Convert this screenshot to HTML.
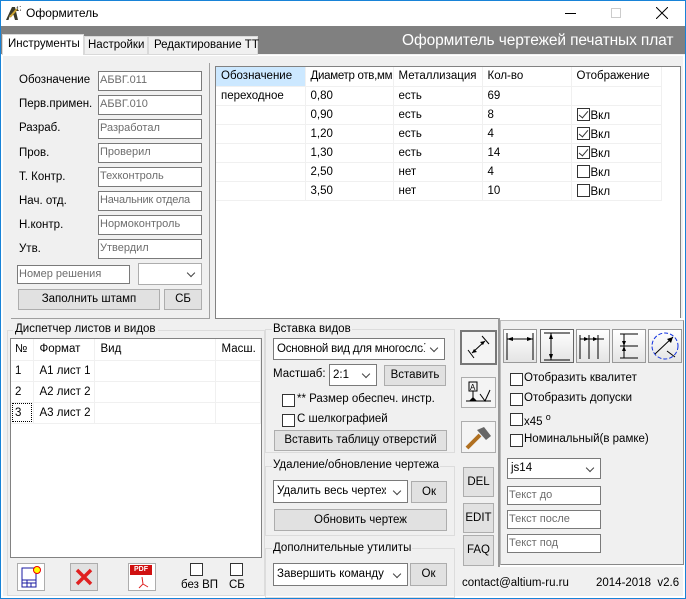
<!DOCTYPE html>
<html><head><meta charset="utf-8"><style>
*{box-sizing:border-box;margin:0;padding:0}
body{width:686px;height:599px;overflow:hidden;background:#f0f0f0;font-family:"Liberation Sans","DejaVu Sans",sans-serif;font-size:11.5px;color:#000;position:relative}
.a{position:absolute}
.win{left:0;top:0;width:686px;height:599px;border:1px solid #1883d7}
.inp{position:absolute;background:#fff;border:1px solid #7a7a7a;color:#6d6d6d;padding-left:1px;line-height:17px;font-size:11px;white-space:nowrap;overflow:hidden}
.btn{position:absolute;background:#e1e1e1;border:1px solid #adadad;text-align:center;font-size:11.5px}
.cmb{position:absolute;background:#fff;border:1px solid #7a7a7a;padding-left:3px;font-size:11.5px;white-space:nowrap;overflow:hidden}
.cmb:after{content:"";position:absolute;right:7px;top:50%;margin-top:-4px;width:5px;height:5px;border-right:1px solid #444;border-bottom:1px solid #444;transform:rotate(45deg);background:#fff;box-shadow:0 0 0 6px #fff}
.cb{position:absolute;width:13px;height:13px;background:#fff;border:1px solid #333}
.lbl{position:absolute;white-space:nowrap}
.grp{position:absolute;border:1px solid #dcdcdc}
.tbl td{border-right:1px solid #f0f0f0;border-bottom:1px solid #f0f0f0;padding-left:5px;height:19px;white-space:nowrap;overflow:hidden}
.lst td{border-right:1px solid #f0f0f0;border-bottom:1px solid #f0f0f0;padding-left:6px;height:21px;white-space:nowrap}
.tb{position:absolute;width:34px;height:34px;background:linear-gradient(#fff,#e4e4e4);border:1px solid #999}
.vb{position:absolute;background:#e1e1e1;border:1px solid #adadad}
.ck{display:inline-block;width:13px;height:13px;border:1px solid #333;vertical-align:-2px;margin-right:1px;position:relative;background:#fff}
.ck.on:after{content:"";position:absolute;left:3px;top:0px;width:4px;height:8px;border-right:1px solid #333;border-bottom:1px solid #333;transform:rotate(40deg)}
</style></head><body>
<div class="a" style="left:0;top:0;width:686px;height:26px;background:#fff"></div>
<svg class="a" style="left:5px;top:5px" width="16" height="16"><path d="M1 15 L7 2 L10 2 L13 15 L10 15 L8.5 10 L5 10 L3.5 15Z" fill="#3a3a2a"/><path d="M5 12 L12 4" stroke="#c8a030" stroke-width="2"/><text x="11" y="6" font-size="6" fill="#000">17</text></svg>
<div class="lbl" style="left:26px;top:6px;font-size:12px">Оформитель</div>
<div class="a" style="left:565px;top:13px;width:11px;height:1px;background:#000"></div>
<div class="a" style="left:611px;top:8px;width:10px;height:10px;border:1px solid #ccc"></div>
<svg class="a" style="left:656px;top:7px" width="12" height="12"><path d="M0 0L12 12M12 0L0 12" stroke="#000" stroke-width="1"/></svg>
<div class="a" style="left:1px;top:26px;width:684px;height:28px;background:#808080"></div>
<div class="lbl" style="left:402px;top:32px;font-size:15.5px;color:#fff;letter-spacing:-0.1px">Оформитель чертежей печатных плат</div>
<div class="a" style="left:84px;top:36px;width:64px;height:19px;background:#f0f0f0;border:1px solid #d9d9d9"></div>
<div class="lbl" style="left:88px;top:39px">Настройки</div>
<div class="a" style="left:148px;top:36px;width:110px;height:19px;background:#f0f0f0;border:1px solid #d9d9d9"></div>
<div class="lbl" style="left:154px;top:39px">Редактирование ТТ</div>
<div class="a" style="left:2px;top:34px;width:82px;height:22px;background:#fff;border:1px solid #d9d9d9;border-bottom:none"></div>
<div class="lbl" style="left:8px;top:38px">Инструменты</div>
<div class="a" style="left:1px;top:55px;width:684px;height:543px;background:#fff"></div>
<div class="a" style="left:3px;top:56px;width:680px;height:540px;background:#f0f0f0"></div>

<div class="a" style="left:11px;top:63px;width:199px;height:256px;border-right:1px solid #a0a0a0;border-bottom:1px solid #a0a0a0"></div>
<div class="lbl" style="left:19px;top:74px">Обозначение</div>
<div class="lbl" style="left:19px;top:98px">Перв.примен.</div>
<div class="lbl" style="left:19px;top:122px">Разраб.</div>
<div class="lbl" style="left:19px;top:147px">Пров.</div>
<div class="lbl" style="left:19px;top:171px">Т. Контр.</div>
<div class="lbl" style="left:19px;top:195px">Нач. отд.</div>
<div class="lbl" style="left:19px;top:219px">Н.контр.</div>
<div class="lbl" style="left:19px;top:243px">Утв.</div>
<div class="inp" style="left:98px;top:71px;width:104px;height:20px">АБВГ.011</div>
<div class="inp" style="left:98px;top:95px;width:104px;height:20px">АБВГ.010</div>
<div class="inp" style="left:98px;top:119px;width:104px;height:20px">Разработал</div>
<div class="inp" style="left:98px;top:143px;width:104px;height:20px">Проверил</div>
<div class="inp" style="left:98px;top:167px;width:104px;height:20px">Техконтроль</div>
<div class="inp" style="left:98px;top:191px;width:104px;height:20px;letter-spacing:-0.2px">Начальник отдела</div>
<div class="inp" style="left:98px;top:215px;width:104px;height:20px">Нормоконтроль</div>
<div class="inp" style="left:98px;top:239px;width:104px;height:20px">Утвердил</div>
<div class="inp" style="left:17px;top:265px;width:113px;height:19px">Номер решения</div>
<div class="cmb" style="left:138px;top:263px;width:64px;height:22px;border-color:#adadad"></div>
<div class="btn" style="left:18px;top:289px;width:142px;height:21px;line-height:19px">Заполнить штамп</div>
<div class="btn" style="left:164px;top:289px;width:38px;height:21px;line-height:19px">СБ</div>

<div class="a" style="left:215px;top:66px;width:466px;height:253px;background:#fff;border:1px solid #828282"></div>
<table class="a tbl" style="left:216px;top:67px;border-collapse:collapse;table-layout:fixed">
<tr><td style="width:89px;background:#cce8ff">Обозначение</td><td style="width:88px;letter-spacing:-0.3px">Диаметр отв,мм</td><td style="width:89px">Металлизация</td><td style="width:89px">Кол-во</td><td style="width:90px">Отображение</td></tr>
<tr><td>переходное</td><td>0,80</td><td>есть</td><td>69</td><td></td></tr>
<tr><td></td><td>0,90</td><td>есть</td><td>8</td><td><span class="ck on"></span>Вкл</td></tr>
<tr><td></td><td>1,20</td><td>есть</td><td>4</td><td><span class="ck on"></span>Вкл</td></tr>
<tr><td></td><td>1,30</td><td>есть</td><td>14</td><td><span class="ck on"></span>Вкл</td></tr>
<tr><td></td><td>2,50</td><td>нет</td><td>4</td><td><span class="ck"></span>Вкл</td></tr>
<tr><td></td><td>3,50</td><td>нет</td><td>10</td><td><span class="ck"></span>Вкл</td></tr>
</table>

<div class="grp" style="left:7px;top:330px;width:258px;height:266px"></div>
<div class="lbl" style="left:13px;top:323px;background:#f0f0f0;padding:0 2px">Диспетчер листов и видов</div>
<div class="a" style="left:10px;top:338px;width:252px;height:220px;background:#fff;border:1px solid #828282"></div>
<table class="a lst" style="left:11px;top:339px;border-collapse:collapse;table-layout:fixed">
<tr><td style="width:22px;padding-left:4px">№</td><td style="width:61px">Формат</td><td style="width:121px">Вид</td><td style="width:45px">Масш.</td></tr>
<tr><td style="padding-left:4px">1</td><td>А1 лист 1</td><td></td><td></td></tr>
<tr><td style="padding-left:4px">2</td><td>А2 лист 2</td><td></td><td></td></tr>
<tr><td style="padding-left:4px;outline:1px dotted #000;outline-offset:-2px">3</td><td>А3 лист 2</td><td></td><td></td></tr>
</table>
<div class="vb" style="left:17px;top:563px;width:28px;height:28px;background:#fff"></div>
<svg class="a" style="left:21px;top:565px" width="24" height="24"><rect x="1" y="3" width="14" height="19" fill="none" stroke="#1a1aa0"/><path d="M1 15H15M1 18H15M6 15V22M10 18V22" stroke="#1a1aa0"/><circle cx="16" cy="5" r="3.5" fill="#ff0" stroke="#e00"/></svg>
<div class="vb" style="left:70px;top:563px;width:28px;height:28px"></div>
<svg class="a" style="left:74px;top:567px" width="20" height="20"><path d="M3 3L17 17M17 3L3 17" stroke="#e02020" stroke-width="3.5"/></svg>
<div class="vb" style="left:128px;top:563px;width:28px;height:28px;background:#fff"></div>
<div class="a" style="left:130px;top:565px;width:22px;height:10px;background:#d01010;color:#fff;font-size:7px;font-weight:bold;text-align:center;line-height:10px">PDF</div>
<svg class="a" style="left:136px;top:576px" width="14" height="14"><path d="M6 1L7 8L3 12M7 8L12 11" stroke="#e02020" fill="none"/></svg>
<div class="cb" style="left:190px;top:563px"></div>
<div class="lbl" style="left:181px;top:579px">без ВП</div>
<div class="cb" style="left:230px;top:563px"></div>
<div class="lbl" style="left:229px;top:579px">СБ</div>

<div class="grp" style="left:265px;top:329px;width:190px;height:124px"></div>
<div class="lbl" style="left:272px;top:323px;background:#f0f0f0;padding:0 1px">Вставка видов</div>
<div class="cmb" style="left:273px;top:338px;width:172px;height:22px;line-height:20px;letter-spacing:-0.2px">Основной вид для многослой</div>
<div class="lbl" style="left:273px;top:368px">Мастшаб:</div>
<div class="cmb" style="left:329px;top:364px;width:48px;height:22px;line-height:20px">2:1</div>
<div class="btn" style="left:384px;top:365px;width:62px;height:21px;line-height:19px">Вставить</div>
<div class="cb" style="left:282px;top:394px"></div>
<div class="lbl" style="left:297px;top:393px">** Размер обеспеч. инстр.</div>
<div class="cb" style="left:282px;top:414px"></div>
<div class="lbl" style="left:297px;top:413px">С шелкографией</div>
<div class="btn" style="left:274px;top:430px;width:173px;height:21px;line-height:19px">Вставить таблицу отверстий</div>

<div class="grp" style="left:265px;top:466px;width:190px;height:70px"></div>
<div class="lbl" style="left:272px;top:459px;background:#f0f0f0;padding:0 1px">Удаление/обновление чертежа</div>
<div class="cmb" style="left:273px;top:480px;width:135px;height:23px;line-height:21px">Удалить весь чертеж</div>
<div class="btn" style="left:411px;top:481px;width:36px;height:22px;line-height:20px">Ок</div>
<div class="btn" style="left:274px;top:509px;width:173px;height:22px;line-height:20px">Обновить чертеж</div>

<div class="grp" style="left:265px;top:548px;width:190px;height:50px"></div>
<div class="lbl" style="left:272px;top:542px;background:#f0f0f0;padding:0 1px">Дополнительные утилиты</div>
<div class="cmb" style="left:273px;top:563px;width:135px;height:23px;line-height:21px">Завершить команду</div>
<div class="btn" style="left:410px;top:563px;width:37px;height:23px;line-height:21px">Ок</div>

<div class="a" style="left:498px;top:318px;width:188px;height:249px;background:#fff;border-left:2px solid #999"></div>
<div class="a" style="left:500px;top:320px;width:184px;height:245px;background:#f0f0f0;border:1px solid #bbb;border-right-color:#888;border-bottom-color:#888"></div>
<div class="vb" style="left:460px;top:330px;width:37px;height:35px;border:2px solid #777;background:#f4f4f4"></div>
<svg class="a" style="left:464px;top:333px" width="30" height="30"><path d="M4 17L10 25M18 3L25 11M8 20L21 8" stroke="#000" fill="none"/><path d="M8 20l5-1-3-3zM21 8l-5 1 3 3z" fill="#000"/></svg>
<div class="vb" style="left:461px;top:377px;width:35px;height:31px;background:#f4f4f4"></div>
<svg class="a" style="left:463px;top:380px" width="30" height="26"><rect x="6" y="2" width="8" height="9" fill="none" stroke="#000"/><text x="7" y="10" font-size="8" font-family="Liberation Sans">A</text><path d="M10 11V20M3 21H28M17 14L22 21L27 10" stroke="#000" fill="none"/><path d="M6 21L10 17L14 21Z" fill="#000"/></svg>
<div class="vb" style="left:461px;top:421px;width:35px;height:32px;background:#f4f4f4"></div>
<svg class="a" style="left:464px;top:424px" width="28" height="26"><path d="M3 24L16 11" stroke="#b07020" stroke-width="4"/><path d="M13 6L20 3L27 12L22 16Z" fill="#666"/></svg>
<div class="vb" style="left:463px;top:467px;width:31px;height:30px;text-align:center;line-height:28px">DEL</div>
<div class="vb" style="left:463px;top:503px;width:31px;height:30px;text-align:center;line-height:28px">EDIT</div>
<div class="vb" style="left:463px;top:535px;width:31px;height:31px;text-align:center;line-height:29px">FAQ</div>

<div class="tb" style="left:503px;top:329px"></div>
<svg class="a" style="left:503px;top:329px" width="34" height="34"><path d="M4 4V31M30 4V31M4 10H30" stroke="#000"/><path d="M4 10l6-2v4zM30 10l-6-2v4z" fill="#000"/></svg>
<div class="tb" style="left:540px;top:329px;border-color:#666"></div>
<svg class="a" style="left:540px;top:329px" width="34" height="34"><path d="M4 4H30M4 31H30M11 4V31" stroke="#000"/><path d="M11 4l-2 6h4zM11 31l-2-6h4z" fill="#000"/></svg>
<div class="tb" style="left:576px;top:329px"></div>
<svg class="a" style="left:576px;top:329px" width="34" height="34"><path d="M4 6V30M13 6V30M22 6V30M4 10H28" stroke="#000"/><path d="M13 10l-5-2v4zM22 10l-5-2v4z" fill="#000"/></svg>
<div class="tb" style="left:612px;top:329px"></div>
<svg class="a" style="left:612px;top:329px" width="34" height="34"><path d="M8 5H26M8 17H26M8 29H26M12 5V29" stroke="#000"/><path d="M12 17l-2-5h4zM12 17l-2 5h4z" fill="#000"/></svg>
<div class="tb" style="left:648px;top:329px"></div>
<svg class="a" style="left:648px;top:329px" width="34" height="34"><circle cx="17" cy="17" r="13" fill="none" stroke="#1030e0" stroke-dasharray="4 2"/><path d="M7 25L25 8M19 22L27 28" stroke="#000"/><path d="M25 8l-6 2 4 4z" fill="#000"/></svg>

<div class="cb" style="left:510px;top:373px"></div><div class="lbl" style="left:524px;top:372px">Отобразить квалитет</div>
<div class="cb" style="left:510px;top:393px"></div><div class="lbl" style="left:524px;top:392px">Отобразить допуски</div>
<div class="cb" style="left:510px;top:413px"></div><div class="lbl" style="left:524px;top:412px">x45 <sup style="font-size:9px">o</sup></div>
<div class="cb" style="left:510px;top:434px"></div><div class="lbl" style="left:524px;top:433px">Номинальный(в рамке)</div>
<div class="cmb" style="left:507px;top:458px;width:94px;height:21px;line-height:19px">js14</div>
<div class="inp" style="left:507px;top:486px;width:94px;height:19px">Текст до</div>
<div class="inp" style="left:507px;top:510px;width:94px;height:19px">Текст после</div>
<div class="inp" style="left:507px;top:534px;width:94px;height:19px">Текст под</div>

<div class="lbl" style="left:462px;top:577px">contact@altium-ru.ru</div>
<div class="lbl" style="left:596px;top:577px">2014-2018&nbsp; v2.6</div>
<div class="a win"></div>
</body></html>
